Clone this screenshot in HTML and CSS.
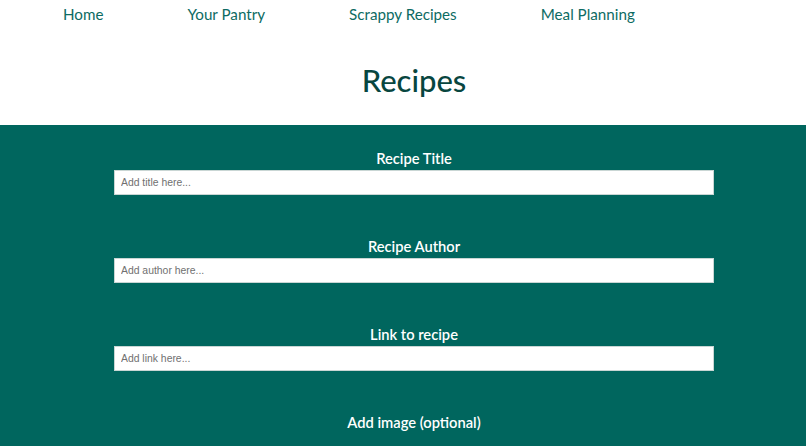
FILE: index.html
```html
<!DOCTYPE html>
<html lang="en">
<head>
<meta charset="utf-8">
<title>Recipes</title>
<link rel="stylesheet" href="styles.css">
</head>
<body>
<header class="site-header">
  <nav class="nav">
    <a class="nav-link" href="#">Home</a>
    <a class="nav-link" href="#">Your Pantry</a>
    <a class="nav-link" href="#">Scrappy Recipes</a>
    <a class="nav-link" href="#">Meal Planning</a>
  </nav>
  <h1 class="page-title">Recipes</h1>
</header>
<main class="panel">
  <form class="recipe-form">
    <div class="field">
      <label class="field-label" for="title">Recipe Title</label>
      <input class="field-input" id="title" type="text" placeholder="Add title here...">
    </div>
    <div class="field">
      <label class="field-label" for="author">Recipe Author</label>
      <input class="field-input" id="author" type="text" placeholder="Add author here...">
    </div>
    <div class="field">
      <label class="field-label" for="link">Link to recipe</label>
      <input class="field-input" id="link" type="text" placeholder="Add link here...">
    </div>
    <div class="field">
      <label class="field-label" for="image">Add image (optional)</label>
      <span class="file-hint">Choose file</span>
    </div>
  </form>
</main>
</body>
</html>
```

FILE: styles.css
```css
html, body {
  margin: 0;
  padding: 0;
}
body {
  font-family: Lato, "Open Sans", sans-serif;
  background: #ffffff;
  overflow: hidden;
}
.site-header {
  background: #ffffff;
}
.nav {
  display: flex;
  gap: 84px;
  padding-left: 63px;
  height: 28px;
  align-items: center;
}
.nav-link {
  color: #0d6b63;
  text-decoration: none;
  font-size: 15.2px;
  line-height: 28px;
}
.page-title {
  margin: 32px 0 0;
  padding-left: 22px;
  height: 65px;
  line-height: 40px;
  text-align: center;
  font-size: 31px;
  font-weight: 500;
  color: #08463f;
}
.panel {
  background: #00665e;
  min-height: 400px;
  padding-left: 22px;
}
.recipe-form {
  display: flex;
  flex-direction: column;
  align-items: center;
  padding-top: 23px;
  gap: 41px;
}
.field {
  display: flex;
  flex-direction: column;
  align-items: center;
  gap: 2px;
}
.field-label {
  color: #ffffff;
  font-size: 14.7px;
  font-weight: 600;
  line-height: 20px;
}
.field-input {
  box-sizing: border-box;
  width: 600px;
  height: 25px;
  margin: 0;
  padding: 0 6px;
  border: 1px solid #c9d6d4;
  background: #ffffff;
  font-family: "Liberation Sans", Arial, sans-serif;
  font-size: 10.4px;
  color: #333333;
  outline: none;
}
.field-input::placeholder {
  color: #707070;
}
.file-hint {
  margin-top: 10px;
  color: #d8ecea;
  font-size: 12px;
  font-family: "Liberation Sans", Arial, sans-serif;
}
```
